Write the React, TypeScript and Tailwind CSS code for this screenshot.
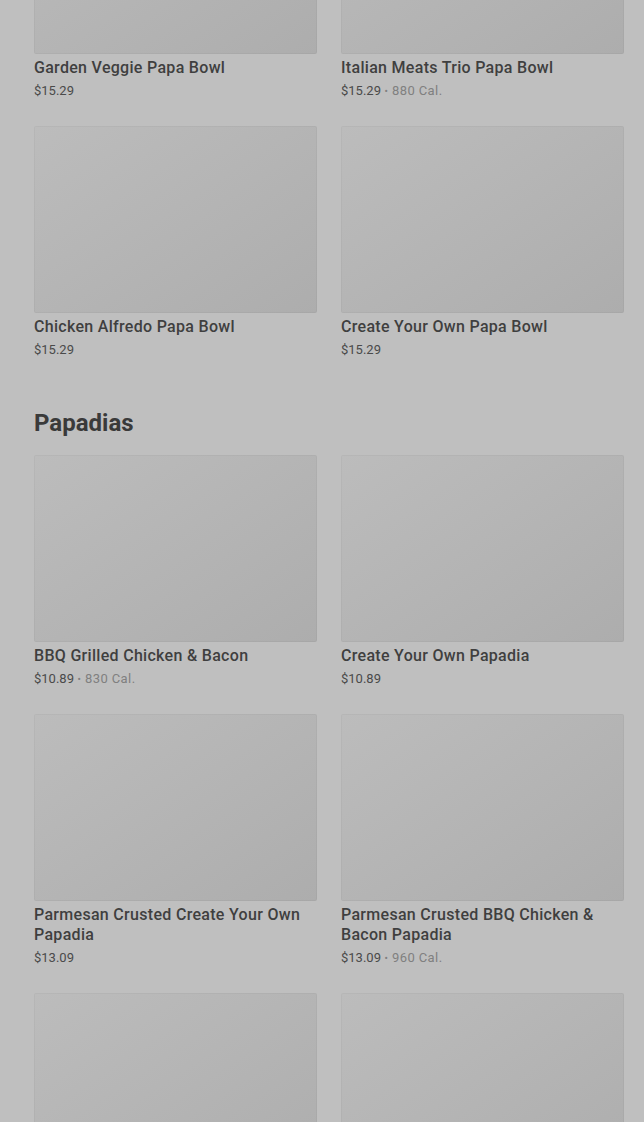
import React from "react";

type Item = { name: string; price: string; cal?: string };

const bowls: Item[] = [
  { name: "Garden Veggie Papa Bowl", price: "$15.29" },
  { name: "Italian Meats Trio Papa Bowl", price: "$15.29", cal: "880 Cal." },
  { name: "Chicken Alfredo Papa Bowl", price: "$15.29" },
  { name: "Create Your Own Papa Bowl", price: "$15.29" },
];

const papadias: Item[] = [
  { name: "BBQ Grilled Chicken & Bacon", price: "$10.89", cal: "830 Cal." },
  { name: "Create Your Own Papadia", price: "$10.89" },
  { name: "Parmesan Crusted Create Your Own Papadia", price: "$13.09" },
  { name: "Parmesan Crusted BBQ Chicken & Bacon Papadia", price: "$13.09", cal: "960 Cal." },
  { name: "", price: "" },
  { name: "", price: "" },
];

function Card({ item }: { item: Item }) {
  return (
    <div className="flex flex-col">
      <div className="h-[187px] w-full rounded-[2px] bg-gradient-to-br from-[#bcbcbc] to-[#adadad] shadow-[inset_0_0_0_1px_rgba(0,0,0,0.03)]" />
      {item.name && (
        <>
          <div className="mt-[4px] text-[16px] leading-[20px] font-medium tracking-[0.3px] text-[#3f3f3f]">{item.name}</div>
          <div className="mt-[3px] text-[13px] leading-[20px] text-[#4a4a4a]">
            {item.price}
            {item.cal && (
              <span className="text-[#808080] tracking-[0.4px]">
                {" "}
                <span className="text-[10px]">•</span> {item.cal}
              </span>
            )}
          </div>
        </>
      )}
    </div>
  );
}

export default function App() {
  return (
    <div
      className="h-[1122px] w-full overflow-hidden bg-[#bfbfbf] pl-[34px] pr-[20px]"
      style={{ fontFamily: "Roboto, 'Liberation Sans', sans-serif" }}
    >
      <div className="mt-[-133px] grid grid-cols-2 gap-x-[24px] gap-y-[24px]">
        {bowls.map((b, i) => (
          <Card key={i} item={b} />
        ))}
      </div>
      <h2 className="mt-[47px] mb-[16px] text-[24px] leading-[32px] font-bold text-[#3a3a3a]">Papadias</h2>
      <div className="grid grid-cols-2 gap-x-[24px] gap-y-[24px]">
        {papadias.map((b, i) => (
          <Card key={i} item={b} />
        ))}
      </div>
    </div>
  );
}
